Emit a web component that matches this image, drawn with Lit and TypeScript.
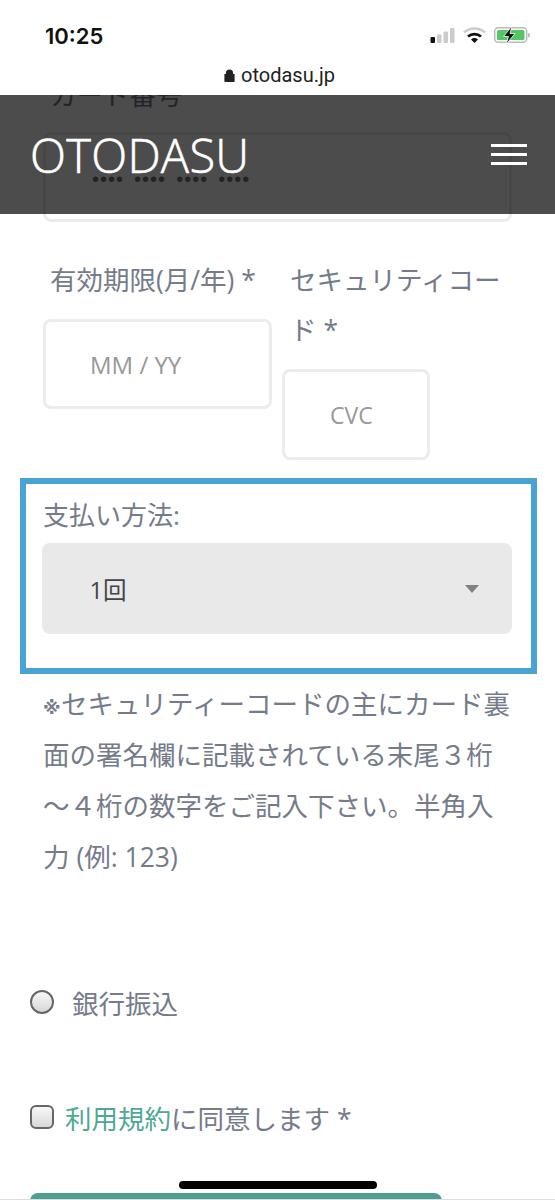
import { LitElement, html, css } from "lit";
import { customElement } from "lit/decorators.js";

@customElement("app-root")
export class AppRoot extends LitElement {
  static styles = css`
    :host { display: block; width: 555px; height: 1200px; position: relative; overflow: hidden; background: #fff;
      font-family: "Open Sans", "Noto Sans CJK JP", sans-serif; color: #747b8a; }
    * { box-sizing: border-box; }
    .status { height: 63px; display: flex; justify-content: space-between; align-items: center; padding: 8px 25px 0 45px; }
    .time { font: 600 22px/1 "Inter", "Liberation Sans", sans-serif; color: #111; }
    .status-icons { display: flex; }
    .url { height: 32px; display: flex; justify-content: center; align-items: flex-start; gap: 6px; padding: 0 0 0 4px;
      font: 20px/24px "Roboto", "Liberation Sans", sans-serif; color: #222; }
    .url svg { margin-top: 6px; }
    .main { height: 1105px; overflow: hidden; padding: 0 43px; font-size: 26.5px; }
    .label { line-height: 50px; padding-left: 7px; }
    .label-first { margin-top: -25px; height: 50px; }
    .input { border: 3px solid #ececec; border-radius: 8px; font-size: 24px; color: #989898; display: flex; align-items: center; background: #fff; }
    .card { width: 469px; height: 90px; margin-top: 12px; padding: 0 46px; }
    .dots { font: 20px/1 "Liberation Sans", sans-serif; letter-spacing: 1px; word-spacing: 3.500px; margin-top: 3px; color: #777; }
    .row { display: flex; gap: 10px; margin-top: 33px; }
    .col-a { width: 229px; flex: none; }
    .col-b { width: 229px; flex: none; }
    .col-b .label { padding-left: 8px; }
    .exp { width: 229px; height: 90px; margin-top: 14px; padding-left: 44px; }
    .cvc { width: 148px; height: 91px; margin-top: 14px; padding-left: 45px; font-size: 23px; }
    .pay { margin: 18px 0 0 -23px; width: 517px; height: 196px; border: 6.5px solid #4aa3d5; padding: 9px 0 0 17px; }
    .pay-label { font-size: 26px; line-height: 44px; }
    .select { width: 470px; height: 91px; margin: 6px 0 0 -1.500px; background: #e9e9e9; border-radius: 8px; display: flex; align-items: center;
      justify-content: space-between; padding: 0 33px 0 48px; font-size: 23.5px; color: #444; }
    .arrow { width: 0; height: 0; border: 7.5px solid transparent; border-top: 8px solid #808080; border-bottom: 0; }
    .note { margin: 5px 0 0; font-size: 26.5px; line-height: 51px; width: 469px; }
    .mark { font: 700 18px/1 "DejaVu Sans", sans-serif; letter-spacing: .5px; }
    .opt { display: flex; align-items: center; margin-left: -13px; font-size: 26.5px; }
    .radio-row { margin-top: 99px; gap: 18px; height: 40px; }
    .check-row { margin-top: 75px; gap: 11px; height: 40px; }
    .radio, .check { width: 24px; height: 24px; flex: none; border: 2px solid #666; background: linear-gradient(#f8f8f8, #d8d8d8); }
    .radio { border-radius: 50%; }
    .check { border-radius: 6px; }
    a { color: #4fa896; text-decoration: none; }
    .submit { width: 412px; height: 40px; margin: 56px 0 0 -13px; background: #4f9e8e; border-radius: 8px 8px 0 0; }
    .header { position: absolute; left: 0; right: 0; top: 95px; height: 119px; background: rgba(0, 0, 0, .7);
      display: flex; align-items: center; justify-content: space-between; padding: 0 28px 0 30px; }
    .logo { font: 300 47px/1 "Open Sans", sans-serif; color: #fff; letter-spacing: .3px; margin-top: 2px; -webkit-text-stroke: .6px #fff; }
    .burger { display: flex; flex-direction: column; gap: 6px; width: 36px; }
    .burger i { display: block; height: 3px; background: #fff; }
    .home { position: absolute; left: 179px; top: 1181px; width: 198px; height: 8px; border-radius: 4px; background: #000; }
    .edge { position: absolute; left: 0; right: 0; bottom: 0; height: 1px; background: #ddd; }
  `;

  render() {
    return html`
      <div class="status">
        <span class="time">10:25</span>
        <div class="status-icons">
          <svg width="100" height="22" viewBox="0 0 100 22">
            <rect x="0.500" y="12" width="4.500" height="6" rx="1" fill="#111" />
            <rect x="7" y="9.500" width="4.500" height="8.500" rx="1" fill="#ccc" />
            <rect x="13.500" y="6.500" width="4.500" height="11.500" rx="1" fill="#ccc" />
            <rect x="20" y="3" width="4.500" height="15" rx="1" fill="#ccc" />
            <path d="M34 7.500a16 16 0 0 1 21 0" fill="none" stroke="#ccc" stroke-width="2.600" />
            <path d="M38 11.500a10 10 0 0 1 13 0" fill="none" stroke="#111" stroke-width="2.800" />
            <path d="M41 14.500a5.500 5.500 0 0 1 7 0l-3.500 3.500z" fill="#111" />
            <rect x="64.700" y="2.700" width="32" height="14.600" rx="3.500" fill="none" stroke="#bbb" stroke-width="1.500" />
            <rect x="98" y="8" width="1.800" height="4.500" rx=".9" fill="#bbb" />
            <rect x="67" y="5" width="27.500" height="10" rx="1.500" fill="#54c664" />
            <path d="M82 1 73.500 11.500h5l-2.500 8 9-11h-5z" fill="#111" stroke="#fff" stroke-width=".8" />
          </svg>
        </div>
      </div>
      <div class="url">
        <svg width="11" height="13" viewBox="0 0 11 13"><path d="M2.500 5.500V4a3 3 0 0 1 6 0v1.500M1 5.500h9V12a1 1 0 0 1-1 1H2a1 1 0 0 1-1-1z" fill="#222" stroke="#222" stroke-width="1.200"/></svg>
        <span>otodasu.jp</span>
      </div>
      <div class="main">
        <div class="label label-first">カード番号</div>
        <div class="input card"><span class="dots">•••• •••• •••• ••••</span></div>
        <div class="row">
          <div class="col-a">
            <div class="label">有効期限(月/年) *</div>
            <div class="input exp">MM / YY</div>
          </div>
          <div class="col-b">
            <div class="label">セキュリティコード *</div>
            <div class="input cvc">CVC</div>
          </div>
        </div>
        <div class="pay">
          <div class="pay-label">支払い方法:</div>
          <div class="select"><span>1回</span><span class="arrow"></span></div>
        </div>
        <p class="note"><span class="mark">※</span>セキュリティーコードの主にカード裏面の署名欄に記載されている末尾３桁～４桁の数字をご記入下さい。半角入力 (例: 123)</p>
        <div class="opt radio-row"><span class="radio"></span><span>銀行振込</span></div>
        <div class="opt check-row"><span class="check"></span><span><a>利用規約</a>に同意します *</span></div>
        <div class="submit"></div>
      </div>
      <div class="header">
        <span class="logo">OTODASU</span>
        <div class="burger"><i></i><i></i><i></i></div>
      </div>
      <div class="edge"></div>
      <div class="home"></div>
    `;
  }
}
